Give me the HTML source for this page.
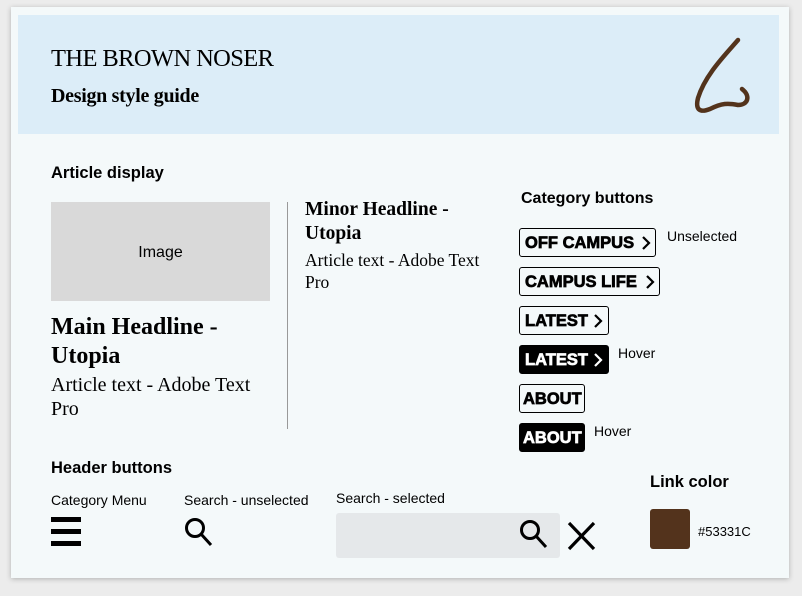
<!DOCTYPE html>
<html><head><meta charset="utf-8"><style>
*{margin:0;padding:0;box-sizing:border-box}
body{width:802px;height:596px;background:#ececec;position:relative;overflow:hidden;font-family:"Liberation Sans",sans-serif;color:#000}
.card{position:absolute;left:11px;top:7px;width:778px;height:571px;background:#f4f9fa;box-shadow:0 1px 5px rgba(0,0,0,.25)}
.a{position:absolute;white-space:nowrap}
.serif{font-family:"Liberation Serif",serif}
.btn{position:absolute;left:519px;height:29px;border:1.5px solid #000;border-radius:3px;font-weight:bold;font-size:16.5px;line-height:29px;padding:0 5px;letter-spacing:0;white-space:nowrap;-webkit-text-stroke:0.7px #000}
.btn.d{background:#000;color:#fff;-webkit-text-stroke:0.7px #fff}
.btn svg{position:absolute;top:7px}
.lbl{font-size:14px}
</style></head><body>
<div class="card"></div>
<div class="a" style="left:18px;top:15px;width:761px;height:119px;background:#dcedf8"></div>
<div class="a serif" style="left:51px;top:45px;font-size:24.5px;letter-spacing:-.6px">THE BROWN NOSER</div>
<div class="a serif" style="left:51px;top:85px;font-size:20px;font-weight:bold;letter-spacing:-.3px">Design style guide</div>
<svg class="a" style="left:680px;top:30px" width="80" height="90" viewBox="680 30 80 90"><path d="M738 40 C725 55 705 75 698 98 C695 110 700 113 710 109 C722 103 728 103 738 105 C748 105 751 96 742 89" fill="none" stroke="#53331c" stroke-width="4.5" stroke-linecap="round"/></svg>
<div class="a" style="left:51px;top:164px;font-size:16.5px;font-weight:bold">Article display</div>
<div class="a" style="left:51px;top:202px;width:219px;height:99px;background:#d9d9d9;text-align:center;line-height:102px;font-size:16px">Image</div>
<div class="a serif" style="left:51px;top:313px;font-size:24px;font-weight:bold;line-height:29px">Main Headline -<br>Utopia</div>
<div class="a serif" style="left:51px;top:373px;font-size:20px;line-height:24px">Article text - Adobe Text<br>Pro</div>
<div class="a" style="left:287px;top:202px;width:1px;height:227px;background:#999"></div>
<div class="a serif" style="left:305px;top:198px;font-size:19.5px;font-weight:bold;line-height:24px">Minor Headline -<br>Utopia</div>
<div class="a serif" style="left:305px;top:249px;font-size:17.5px;line-height:22px">Article text - Adobe Text<br>Pro</div>
<div class="a" style="left:521px;top:190px;font-size:16px;font-weight:bold">Category buttons</div>
<div class="btn" style="top:228px;width:137px">OFF CAMPUS<svg style="left:121px" width="10" height="14"><path d="M2 1 L8 7 L2 13" fill="none" stroke="#000" stroke-width="2.2"/></svg></div>
<div class="btn" style="top:267px;width:141px">CAMPUS LIFE<svg style="left:125px" width="10" height="14"><path d="M2 1 L8 7 L2 13" fill="none" stroke="#000" stroke-width="2.2"/></svg></div>
<div class="btn" style="top:306px;width:90px">LATEST<svg style="left:73px" width="10" height="14"><path d="M2 1 L8 7 L2 13" fill="none" stroke="#000" stroke-width="2.2"/></svg></div>
<div class="btn d" style="top:345px;width:90px">LATEST<svg style="left:73px" width="10" height="14"><path d="M2 1 L8 7 L2 13" fill="none" stroke="#fff" stroke-width="2.2"/></svg></div>
<div class="btn" style="top:384px;width:66px;padding:0 3px">ABOUT</div>
<div class="btn d" style="top:423px;width:66px;padding:0 3px">ABOUT</div>
<div class="a lbl" style="left:667px;top:228px">Unselected</div>
<div class="a lbl" style="left:618px;top:345px">Hover</div>
<div class="a lbl" style="left:594px;top:423px">Hover</div>
<div class="a" style="left:51px;top:459px;font-size:16.5px;font-weight:bold">Header buttons</div>
<div class="a lbl" style="left:51px;top:492px">Category Menu</div>
<div class="a lbl" style="left:184px;top:492px">Search - unselected</div>
<div class="a lbl" style="left:336px;top:490px">Search - selected</div>
<div class="a" style="left:650px;top:473px;font-size:16.5px;font-weight:bold">Link color</div>
<div class="a" style="left:51px;top:517px;width:30px;height:5px;background:#000"></div>
<div class="a" style="left:51px;top:529px;width:30px;height:5px;background:#000"></div>
<div class="a" style="left:51px;top:541px;width:30px;height:5px;background:#000"></div>
<svg class="a" style="left:183px;top:516px" width="32" height="34"><circle cx="12" cy="12" r="8.5" fill="none" stroke="#000" stroke-width="3"/><path d="M18 18 L28 29" stroke="#000" stroke-width="3"/></svg>
<div class="a" style="left:336px;top:513px;width:224px;height:45px;background:#e5e8ea;border-radius:3px"></div>
<svg class="a" style="left:518px;top:518px" width="32" height="34"><circle cx="12" cy="12" r="8.5" fill="none" stroke="#000" stroke-width="3"/><path d="M18 18 L28 29" stroke="#000" stroke-width="3"/></svg>
<svg class="a" style="left:566px;top:521px" width="32" height="30"><path d="M3 2 L28 28 M28 2 L3 28" stroke="#000" stroke-width="3.2"/></svg>
<div class="a" style="left:650px;top:509px;width:40px;height:40px;background:#53331c;border-radius:3px"></div>
<div class="a" style="left:698px;top:524px;font-size:13px">#53331C</div>
</body></html>
